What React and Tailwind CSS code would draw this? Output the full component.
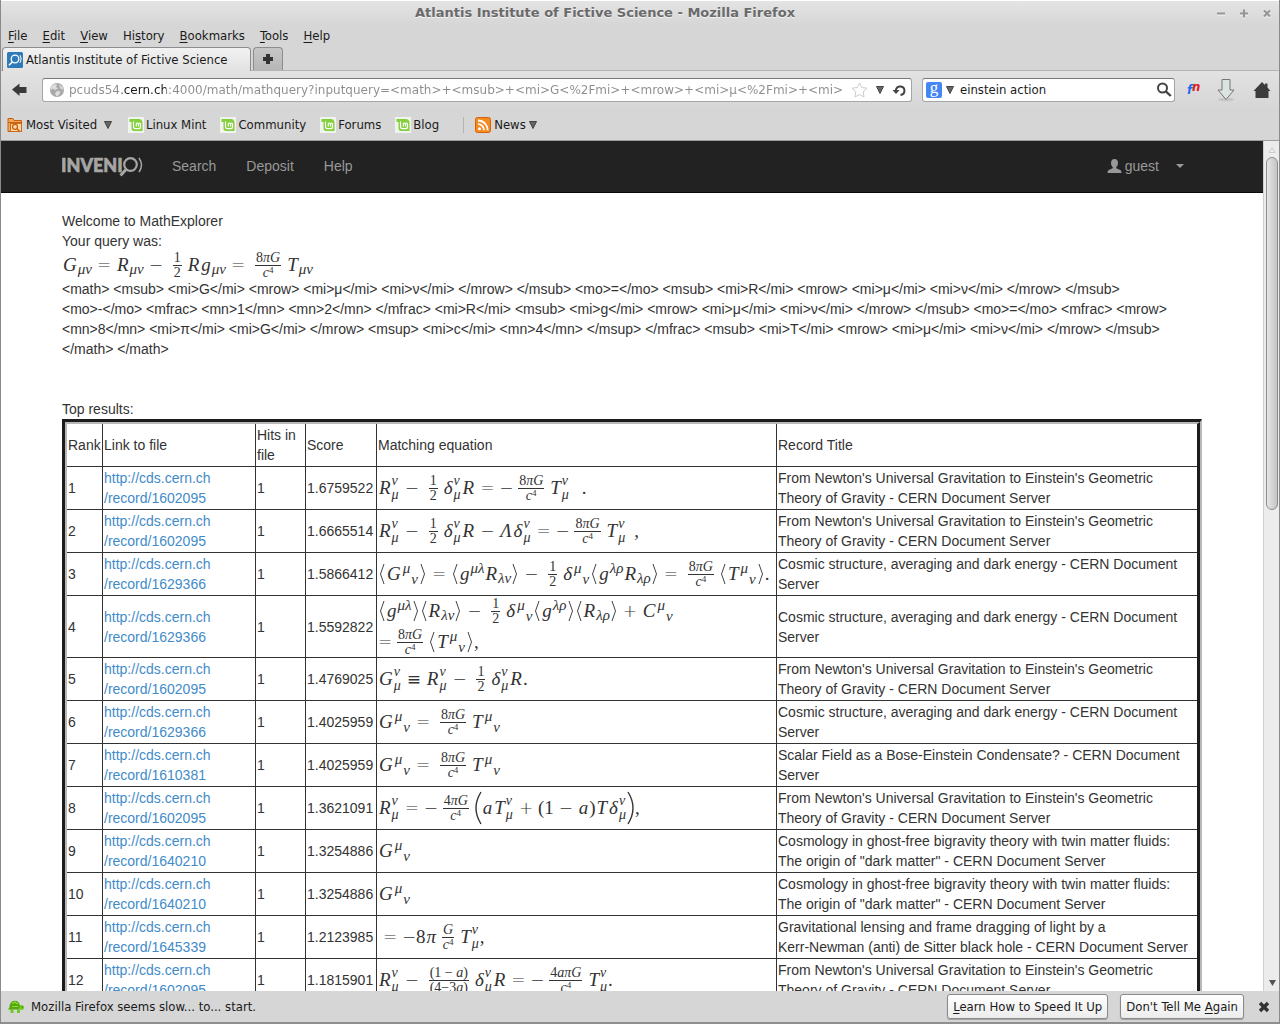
import React from "react";

/* ---------- math typesetting ---------- */

const V = ({ children }) => <i className="mx-px">{children}</i>;
const N = ({ children }) => <span>{children}</span>;
const Op = ({ children }) => (
  <span className="mx-[5px] w-[14px] text-center font-['DejaVu_Sans'] text-[17px] font-extralight">{children}</span>
);
const Equiv = () => <span className="mx-[5px] w-[14px] text-center font-['DejaVu_Sans'] text-[17px] font-normal">≡</span>;
const Neg = () => (
  <span className="w-[14px] text-center font-['DejaVu_Sans'] text-[17px] font-extralight">−</span>
);
/* superscript stacked above a subscript */
const SS = ({ up, down }) => (
  <span className="mr-px inline-flex flex-col text-[14px] leading-[14px] italic">
    <span>{up}</span>
    <span>{down}</span>
  </span>
);
/* superscript followed by a staggered subscript */
const Stag = ({ up, down }) => (
  <span className="mx-px inline-flex gap-px text-[15px] leading-[15px] italic">
    <span className="mb-[11px]">{up}</span>
    <span className="mt-[11px]">{down}</span>
  </span>
);
const Sub = ({ children }) => <span className="mt-2 text-[15px] leading-[15px] italic">{children}</span>;
const Sup = ({ children }) => <span className="mb-3 text-[15px] leading-[15px] italic">{children}</span>;
const Frac = ({ top, bottom }) => (
  <span className="mx-[5px] inline-flex flex-col items-center text-[14px] leading-[14px]">
    <span className="self-stretch border-b border-[#333] px-px text-center">{top}</span>
    <span>{bottom}</span>
  </span>
);
const C4 = () => (
  <span className="flex">
    <i>c</i>
    <span className="text-[9px] leading-[9px]">4</span>
  </span>
);
const Half = () => <Frac top="1" bottom="2" />;
const EightPi = () => <Frac top={<>8<i>πG</i></>} bottom={<C4 />} />;
const Fence = ({ d }) => (
  <svg width="8" height="24" viewBox="0 0 8 24" fill="none" stroke="#444" strokeWidth="1" className="shrink-0">
    <path d={d === "l" ? "M6 2L2.5 12L6 22" : "M2 2L5.500 12L2 22"} />
  </svg>
);
const Big = ({ d }) => (
  <svg width="8" height="34" viewBox="0 0 8 34" fill="none" stroke="#333" strokeWidth="1.4" className="shrink-0">
    <path d={d === "l" ? "M7 1Q-3 17 7 33" : "M1 1Q11 17 1 33"} />
  </svg>
);
const Eq = ({ children }) => (
  <span className="flex h-7 items-center font-['Liberation_Serif',serif] text-[19px] leading-5 whitespace-nowrap">
    {children}
  </span>
);
const Rmn = () => <><V>R</V><SS up="ν" down="μ" /></>;
const Dmn = () => <><V>δ</V><SS up="ν" down="μ" /></>;
const Tmn = () => <><V>T</V><SS up="ν" down="μ" /></>;
const GStag = () => <><V>G</V><Stag up="μ" down="ν" /></>;
const TStag = () => <><V>T</V><Stag up="μ" down="ν" /></>;
const EqG = () => <Eq><GStag /><Op>=</Op><EightPi /><TStag /></Eq>;

const NEWTON = ["From Newton's Universal Gravitation to Einstein's Geometric", "Theory of Gravity - CERN Document Server"];
const COSMIC = ["Cosmic structure, averaging and dark energy - CERN Document", "Server"];
const GHOST = ["Cosmology in ghost-free bigravity theory with twin matter fluids:", "The origin of \"dark matter\" - CERN Document Server"];

const rows = [
  { rec: "1602095", score: "1.6759522", title: NEWTON,
    eq: <Eq><Rmn /><Op>−</Op><Half /><Dmn /><V>R</V><Op>=</Op><Neg /><EightPi /><Tmn /><span className="ml-3">.</span></Eq> },
  { rec: "1602095", score: "1.6665514", title: NEWTON,
    eq: <Eq><Rmn /><Op>−</Op><Half /><Dmn /><V>R</V><Op>−</Op><V>Λ</V><Dmn /><Op>=</Op><Neg /><EightPi /><Tmn /><span className="ml-2">,</span></Eq> },
  { rec: "1629366", score: "1.5866412", title: COSMIC,
    eq: <Eq><Fence d="l" /><GStag /><Fence d="r" /><Op>=</Op><Fence d="l" /><V>g</V><Sup>μλ</Sup><V>R</V><Sub>λν</Sub><Fence d="r" /><Op>−</Op><Half /><V>δ</V><Stag up="μ" down="ν" /><Fence d="l" /><V>g</V><Sup>λρ</Sup><V>R</V><Sub>λρ</Sub><Fence d="r" /><Op>=</Op><EightPi /><Fence d="l" /><TStag /><Fence d="r" />.</Eq> },
  { rec: "1629366", score: "1.5592822", title: COSMIC,
    eq: <div className="flex flex-col gap-[3px]">
      <Eq><Fence d="l" /><V>g</V><Sup>μλ</Sup><Fence d="r" /><Fence d="l" /><V>R</V><Sub>λν</Sub><Fence d="r" /><Op>−</Op><Half /><V>δ</V><Stag up="μ" down="ν" /><Fence d="l" /><V>g</V><Sup>λρ</Sup><Fence d="r" /><Fence d="l" /><V>R</V><Sub>λρ</Sub><Fence d="r" /><Op>+</Op><V>C</V><Stag up="μ" down="ν" /></Eq>
      <Eq><span className="w-[14px] text-center font-['DejaVu_Sans'] text-[17px] font-extralight">=</span><EightPi /><Fence d="l" /><TStag /><Fence d="r" />,</Eq>
    </div> },
  { rec: "1602095", score: "1.4769025", title: NEWTON,
    eq: <Eq><V>G</V><SS up="ν" down="μ" /><Equiv /><Rmn /><Op>−</Op><Half /><Dmn /><V>R</V>.</Eq> },
  { rec: "1629366", score: "1.4025959", title: COSMIC, eq: <EqG /> },
  { rec: "1610381", score: "1.4025959", title: ["Scalar Field as a Bose-Einstein Condensate? - CERN Document", "Server"], eq: <EqG /> },
  { rec: "1602095", score: "1.3621091", title: NEWTON,
    eq: <Eq><Rmn /><Op>=</Op><Neg /><Frac top={<>4<i>πG</i></>} bottom={<C4 />} /><Big d="l" /><V>a</V><Tmn /><Op>+</Op><N>(1</N><Op>−</Op><V>a</V><N>)</N><V>T</V><Dmn /><Big d="r" />,</Eq> },
  { rec: "1640210", score: "1.3254886", title: GHOST, eq: <Eq><GStag /></Eq> },
  { rec: "1640210", score: "1.3254886", title: GHOST, eq: <Eq><GStag /></Eq> },
  { rec: "1645339", score: "1.2123985", title: ["Gravitational lensing and frame dragging of light by a", "Kerr-Newman (anti) de Sitter black hole - CERN Document Server"],
    eq: <Eq><Op>=</Op><Neg />8<V>π</V><Frac top={<i>G</i>} bottom={<C4 />} /><Tmn />,</Eq> },
  { rec: "1602095", score: "1.1815901", title: NEWTON,
    eq: <Eq><Rmn /><Op>−</Op><Frac top={<>(1 − <i>a</i>)</>} bottom={<>(4−3<i>a</i>)</>} /><Dmn /><V>R</V><Op>=</Op><Neg /><Frac top={<>4<i>aπG</i></>} bottom={<C4 />} /><Tmn />.</Eq> },
];

/* ---------- icons ---------- */

const Tri = () => (
  <svg width="8" height="8" viewBox="0 0 8 8" className="shrink-0">
    <path d="M.5 .5h7L4 7.5z" fill="#666" stroke="#444" strokeWidth="1" />
  </svg>
);
const SiteIcon = () => (
  <svg width="16" height="16" viewBox="0 0 16 16" fill="none" stroke="#fff">
    <rect width="16" height="16" rx="1.5" fill="#2f7ab8" stroke="none" />
    <circle cx="8" cy="7" r="3.8" strokeWidth="1.3" />
    <path d="M5.5 9.8L2 13.3" strokeWidth="1.6" />
    <path d="M13 3.2q2.4 3.8 0 7.6" strokeWidth="1" />
  </svg>
);
const Mint = () => (
  <svg width="16" height="16" viewBox="0 0 16 16" fill="none">
    <rect width="16" height="16" fill="#f1f3ef" />
    <path d="M1.5 2H10.5Q14.5 2 14.5 6V14H6Q3.500 14 3.500 11V5H1.500z" fill="#83cf3c" />
    <path d="M5.500 4.500V9.500Q5.500 11.700 7.500 11.700H10.500Q12.500 11.700 12.500 9.700V7Q12.500 6 11.500 6T10.500 7V9.500M10.500 7Q10.500 6 9.400 6T8.300 7V9.500" stroke="#fff" strokeWidth="1.200" />
  </svg>
);
const Folder = () => (
  <svg width="16" height="16" viewBox="0 0 16 16" fill="none">
    <path d="M1 1.500h5l1 2h7.500v11h-13.500z" fill="#f3a75c" stroke="#c9600e" />
    <path d="M1 5.500H15" stroke="#c9600e" />
    <rect x="3.500" y="6.500" width="11" height="8" fill="#fbd9ae" stroke="#d2691a" />
    <circle cx="8" cy="9.800" r="2.500" stroke="#c9600e" strokeWidth="1.300" />
    <path d="M9.800 11.600L12.500 14" stroke="#c9600e" strokeWidth="1.500" />
  </svg>
);
const Rss = () => (
  <svg width="16" height="16" viewBox="0 0 16 16" fill="none">
    <rect x=".5" y=".5" width="15" height="15" rx="2" fill="#f68a1f" stroke="#d4610c" />
    <circle cx="4.500" cy="11.700" r="1.500" fill="#fff" />
    <path d="M3 7.200A6 6 0 0 1 9 13.200M3 3.500A9.700 9.700 0 0 1 12.700 13.200" stroke="#fff" strokeWidth="1.800" />
  </svg>
);
const Globe = () => (
  <svg width="16" height="16" viewBox="0 0 16 16">
    <circle cx="8" cy="8" r="7" fill="#a9a9a9" />
    <path d="M3 3.500Q6 1.500 8 2.500L7 5L9 6.500L6 8L4 6.500L2 8Q1.500 5.500 3 3.500zM10 2.500L13.500 5L14 8L11.500 6.500zM8 9L11.500 9.500L10 13L7.500 14.300L6 11.500z" fill="#dedede" />
  </svg>
);
const Logo = () => (
  <svg width="82" height="24" viewBox="0 0 82 24" fill="none" stroke="#a6a6a6" aria-label="Invenio">
    <text x="-1" y="18" fill="#a6a6a6" strokeWidth=".6" fontFamily="Lato" fontWeight="900" fontSize="18">INVENI</text>
    <circle cx="68.500" cy="10.500" r="6.300" strokeWidth="2.200" />
    <path d="M64 15.500L58.500 21.500" strokeWidth="3" />
    <path d="M77 4q5 7 0 14" strokeWidth="1.500" />
  </svg>
);
const Person = () => (
  <svg width="15" height="14" viewBox="0 0 15 14" fill="#999">
    <path d="M7.500 0C10 0 11 1.800 11 4C11 6 10.200 7.200 9.300 8V9.300L13.200 11Q14.500 11.700 14.500 14H.5Q.5 11.700 1.800 11L5.700 9.300V8C4.800 7.200 4 6 4 4C4 1.800 5 0 7.500 0z" />
  </svg>
);
const Turtle = () => (
  <svg width="17" height="14" viewBox="0 0 17 14">
    <circle cx="13.500" cy="7.500" r="2.500" fill="#73c921" />
    <path d="M2.500 9.500h3V13H2.500zM9 9.500h3V13H9z" fill="#73c921" />
    <path d="M0 9Q2 8.500 1.500 6Q2.500 .8 7 .8T12 6.500Q11.500 9 10 9.500H2Q1 10 0 9z" fill="#55a80c" />
    <path d="M4 3.500L7 2L10 4M4 6.500h6" stroke="#8ae234" strokeWidth="1.200" fill="none" />
    <circle cx="14.300" cy="7" r=".6" fill="#234d00" />
  </svg>
);

const menus = [["", "F", "ile"], ["", "E", "dit"], ["", "V", "iew"], ["Hi", "s", "tory"], ["", "B", "ookmarks"], ["", "T", "ools"], ["", "H", "elp"]];

const QUERY = [
  "<math> <msub> <mi>G</mi> <mrow> <mi>μ</mi> <mi>ν</mi> </mrow> </msub> <mo>=</mo> <msub> <mi>R</mi> <mrow> <mi>μ</mi> <mi>ν</mi> </mrow> </msub>",
  "<mo>-</mo> <mfrac> <mn>1</mn> <mn>2</mn> </mfrac> <mi>R</mi> <msub> <mi>g</mi> <mrow> <mi>μ</mi> <mi>ν</mi> </mrow> </msub> <mo>=</mo> <mfrac> <mrow>",
  "<mn>8</mn> <mi>π</mi> <mi>G</mi> </mrow> <msup> <mi>c</mi> <mn>4</mn> </msup> </mfrac> <msub> <mi>T</mi> <mrow> <mi>μ</mi> <mi>ν</mi> </mrow> </msub>",
  "</math> </math>",
];

const td = "border-r border-b border-[#333] p-px";
const statusBtn =
  "h-[25px] rounded-[3px] border border-[#8a8a8a] bg-linear-to-b from-white to-[#ececec] px-1 shadow-[0_1px_1px_rgba(0,0,0,0.25)]";

export default function App() {
  return (
    <div className="flex h-screen flex-col overflow-hidden border-x border-[#8a8a8a] bg-[#d6d6d6] font-['DejaVu_Sans_Condensed','DejaVu_Sans',sans-serif] text-[13px] leading-4 text-[#1a1a1a]">
      {/* title bar */}
      <header className="flex h-[25px] shrink-0 items-center border-t border-white bg-linear-to-b from-[#e4e4e4] to-[#d6d6d6] pr-1">
        <div className="w-[66px] shrink-0" />
        <h1 className="flex-1 text-center font-['DejaVu_Sans',sans-serif] font-bold text-[#6a6a6a] [text-shadow:0_1px_0_#f4f4f4]">
          Atlantis Institute of Fictive Science - Mozilla Firefox
        </h1>
        <div className="flex w-[132px] shrink-0 justify-end gap-[7px]">
          {["M4 8.500H12", "M4 8.500H12M8 4.500V12.500", "M5 5.500L11 11.500M11 5.500L5 11.500"].map((d, i) => (
            <button key={i} aria-label={["Minimize", "Maximize", "Close"][i]}>
              <svg width="16" height="16" viewBox="0 0 16 16" fill="none" strokeWidth="2">
                <path d={d} stroke="#f6f6f6" transform="translate(0 1)" />
                <path d={d} stroke="#949494" />
              </svg>
            </button>
          ))}
        </div>
      </header>

      <nav className="flex h-[22px] shrink-0 items-center gap-[15px] px-[7px] pb-px">
        {menus.map(([a, b, c]) => (
          <button key={b + c}>{a}<span className="underline underline-offset-2">{b}</span>{c}</button>
        ))}
      </nav>

      {/* tabs */}
      <div className="flex h-[24px] shrink-0 items-end gap-[2px] border-b border-[#b5b5b5] pl-px">
        <button className="-mb-px flex h-[24px] w-[249px] items-center gap-[3px] rounded-t-[4px] border border-b-0 border-[#8c8c8c] bg-linear-to-b from-[#f2f2f2] to-[#e2e2e2] pl-1 whitespace-nowrap">
          <SiteIcon />Atlantis Institute of Fictive Science
        </button>
        <button aria-label="New tab" className="flex h-[23px] w-[30px] items-center justify-center rounded-t-[4px] border border-b-0 border-[#8c8c8c] bg-linear-to-b from-[#c6c6c6] to-[#b6b6b6]">
          <svg width="12" height="12" viewBox="0 0 12 12"><path d="M4 1h4v3h3v4H8v3H4V8H1V4h3z" fill="#333" /></svg>
        </button>
      </div>

      {/* navigation toolbar */}
      <div className="flex h-[38px] shrink-0 items-center bg-linear-to-b from-[#e2e2e2] to-[#d6d6d6] pr-2 pl-[11px]">
        <button aria-label="Back" className="mr-[15px]">
          <svg width="15" height="14" viewBox="0 0 15 14"><path d="M0 6.500L7.500 .5V4H14.500V10H7.500V13z" fill="#3a3a3a" /></svg>
        </button>
        <div className="flex h-[24px] flex-1 items-center rounded-[3px] border border-[#a5a5a5] border-t-[#777] bg-white pr-1 pl-1.5">
          <Globe />
          <input
            aria-label="Address"
            defaultValue="pcuds54.cern.ch:4000/math/mathquery?inputquery=<math>+<msub>+<mi>G<%2Fmi>+<mrow>+<mi>μ<%2Fmi>+<mi>"
            className="ml-1 min-w-0 flex-1 bg-[linear-gradient(90deg,#8c8c8c_53px,#1a1a1a_53px,#1a1a1a_97px,#8c8c8c_97px)] bg-clip-text font-['DejaVu_Sans',sans-serif] text-[12px] text-transparent outline-none"
          />
          <button aria-label="Bookmark this page" className="mx-1">
            <svg width="17" height="16" viewBox="0 0 17 16" fill="#fff" stroke="#ccc"><path d="M8.500 1L10.700 5.500L16 6.200L12.200 9.800L13 15L8.500 12.500L4 15L4.800 9.800L1 6.200L6.300 5.500z" /></svg>
          </button>
          <button aria-label="History" className="ml-1"><Tri /></button>
          <button aria-label="Reload" className="ml-[8px]">
            <svg width="15" height="15" viewBox="0 0 15 15" fill="none"><path d="M4 8V6.500A4.300 4.300 0 1 1 8.500 12" stroke="#444" strokeWidth="2" /><path d="M.5 7h7L4 11z" fill="#444" /></svg>
          </button>
        </div>
        <div className="ml-[10px] flex h-[24px] w-[253px] items-center rounded-[3px] border border-[#a5a5a5] border-t-[#777] bg-white pr-[2px] pl-[3px]">
          <button aria-label="Search engine" className="flex items-center gap-1">
            <span className="flex h-4 w-4 items-center justify-center rounded-[2px] bg-[#4486f4] pb-1 font-['Liberation_Serif'] text-[17px] leading-4 text-white">g</span>
            <Tri />
          </button>
          <input aria-label="Search" defaultValue="einstein action" className="ml-[6px] min-w-0 flex-1 outline-none" />
          <button aria-label="Go">
            <svg width="16" height="16" viewBox="0 0 16 16" fill="none" stroke="#444"><circle cx="6.500" cy="6" r="4.500" strokeWidth="2" /><path d="M9.800 9.300L14.800 14" strokeWidth="2.400" /></svg>
          </button>
        </div>
        <button aria-label="fn" className="ml-[12px] flex w-[16px] items-start font-bold italic">
          <span className="text-[13px] text-[#1e6bf0]">f</span>
          <span className="text-[13px] leading-[10px] text-[#e11c1c]">n</span>
        </button>
        <button aria-label="Downloads" className="ml-[13px]">
          <svg width="20" height="24" viewBox="0 0 20 24"><ellipse cx="10" cy="21.500" rx="8" ry="1.800" fill="#c4c4c4" /><path d="M6 1.500h8V12h4L10 21.500L2 12h4z" fill="#dde3e3" stroke="#747874" /></svg>
        </button>
        <button aria-label="Home" className="ml-[17px]">
          <svg width="18" height="18" viewBox="0 0 18 18"><path d="M9 1L12 4V2.500H14.500V6.500L17.500 10H15.500V17H2.500V10H.5z" fill="#3c3c3c" /></svg>
        </button>
      </div>

      {/* bookmarks */}
      <div className="flex h-[32px] shrink-0 items-center border-b border-[#9c9c9c] pl-[6px]">
        <button className="mr-[16px] flex items-center gap-[3px]"><Folder />Most Visited&nbsp;<Tri /></button>
        {["Linux Mint", "Community", "Forums", "Blog"].map((b) => (
          <a key={b} href="#" className="mr-[14px] flex items-center gap-[2px]"><Mint />{b}</a>
        ))}
        <span className="mr-[11px] ml-[10px] h-4 border-l border-[#b4b4b4]" />
        <button className="flex items-center gap-[3px]"><Rss />News <Tri /></button>
      </div>

      {/* page */}
      <div className="flex min-h-0 flex-1">
        <main className="min-w-0 flex-1 overflow-hidden bg-white font-['Liberation_Sans',sans-serif] text-[14px] leading-5 text-[#333]">
          <div className="border-b border-[#080808] bg-[#222] text-[#999]">
            <div className="mx-auto flex h-[51px] max-w-[1140px] items-center pb-px">
              <a href="#" className="mr-[28px]"><Logo /></a>
              <nav className="flex gap-[30px]">
                {["Search", "Deposit", "Help"].map((t) => <a key={t} href="#">{t}</a>)}
              </nav>
              <button className="mr-[18px] ml-auto flex items-center gap-[3px]">
                <Person />guest
                <span className="ml-[14px] border-x-4 border-t-4 border-x-transparent border-t-[#999]" />
              </button>
            </div>
          </div>
          <div className="mx-auto max-w-[1140px] pt-[18px]">
            <p>Welcome to MathExplorer</p>
            <p>Your query was:</p>
            <Eq><V>G</V><Sub>μν</Sub><Op>=</Op><V>R</V><Sub>μν</Sub><Op>−</Op><Half /><V>R</V><V>g</V><Sub>μν</Sub><Op>=</Op><EightPi /><V>T</V><Sub>μν</Sub></Eq>
            <p>{QUERY.map((q) => <React.Fragment key={q}>{q}<br /></React.Fragment>)}</p>
            <p className="mt-10">Top results:</p>
            <div className="border-t-3 border-r-2 border-l-3 border-t-[#1c1c1c] border-r-[#b8b8b8] border-l-[#1c1c1c]">
              <div className="border-t-2 border-r-3 border-l-2 border-t-[#b8b8b8] border-r-[#1c1c1c] border-l-[#b8b8b8]">
                <table className="w-full table-fixed border-separate border-spacing-0 text-left">
                  <colgroup>
                    <col className="w-[36px]" /><col className="w-[153px]" /><col className="w-[50px]" />
                    <col className="w-[71px]" /><col className="w-[400px]" /><col />
                  </colgroup>
                  <thead>
                    <tr>
                      {["Rank", "Link to file", "Hits in file", "Score", "Matching equation", "Record Title"].map((h) => (
                        <th key={h} className={td + " font-normal last:border-r-0"}>{h}</th>
                      ))}
                    </tr>
                  </thead>
                  <tbody>
                    {rows.map((r, i) => (
                      <tr key={i}>
                        <td className={td}>{i + 1}</td>
                        <td className={td}><a href="#" className="text-[#428bca]">http://cds.cern.ch<br />/record/{r.rec}</a></td>
                        <td className={td}>1</td>
                        <td className={td}>{r.score}</td>
                        <td className={td}>{r.eq}</td>
                        <td className={td + " border-r-0 whitespace-nowrap"}>{r.title[0]}<br />{r.title[1]}</td>
                      </tr>
                    ))}
                  </tbody>
                </table>
              </div>
            </div>
          </div>
        </main>
        <div className="flex w-[16px] shrink-0 flex-col items-center border-l border-[#cfcfcf] bg-[#ececec]">
          <svg width="14" height="16" viewBox="0 0 14 16"><path d="M4 11.500L7 6.500L10 11.500z" fill="none" stroke="#ccc" /></svg>
          <div className="h-[353px] w-[12px] rounded-full border border-[#8c8c8c] bg-linear-to-r from-[#e6e6e6] to-[#c4c4c4]" />
          <svg className="mt-auto" width="14" height="16" viewBox="0 0 14 16"><path d="M4 5h7L7.500 11z" fill="#555" /></svg>
        </div>
      </div>

      {/* notification bar */}
      <footer className="flex h-[33px] shrink-0 items-center gap-3 border-b-2 border-[#8f8f8f] pr-[9px] pl-[7px]">
        <div className="mr-auto flex items-center gap-[6px]"><Turtle />Mozilla Firefox seems slow... to... start.</div>
        <button className={statusBtn + " px-[5px]"}><span className="underline underline-offset-2">L</span>earn How to Speed It Up</button>
        <button className={statusBtn + " px-[5px]"}>Don't Tell Me <span className="underline underline-offset-2">A</span>gain</button>
        <button aria-label="Close" className="ml-[2px]">
          <svg width="12" height="12" viewBox="0 0 12 12"><path d="M2 2L10 10M10 2L2 10" stroke="#333" strokeWidth="3.400" /></svg>
        </button>
      </footer>
    </div>
  );
}
